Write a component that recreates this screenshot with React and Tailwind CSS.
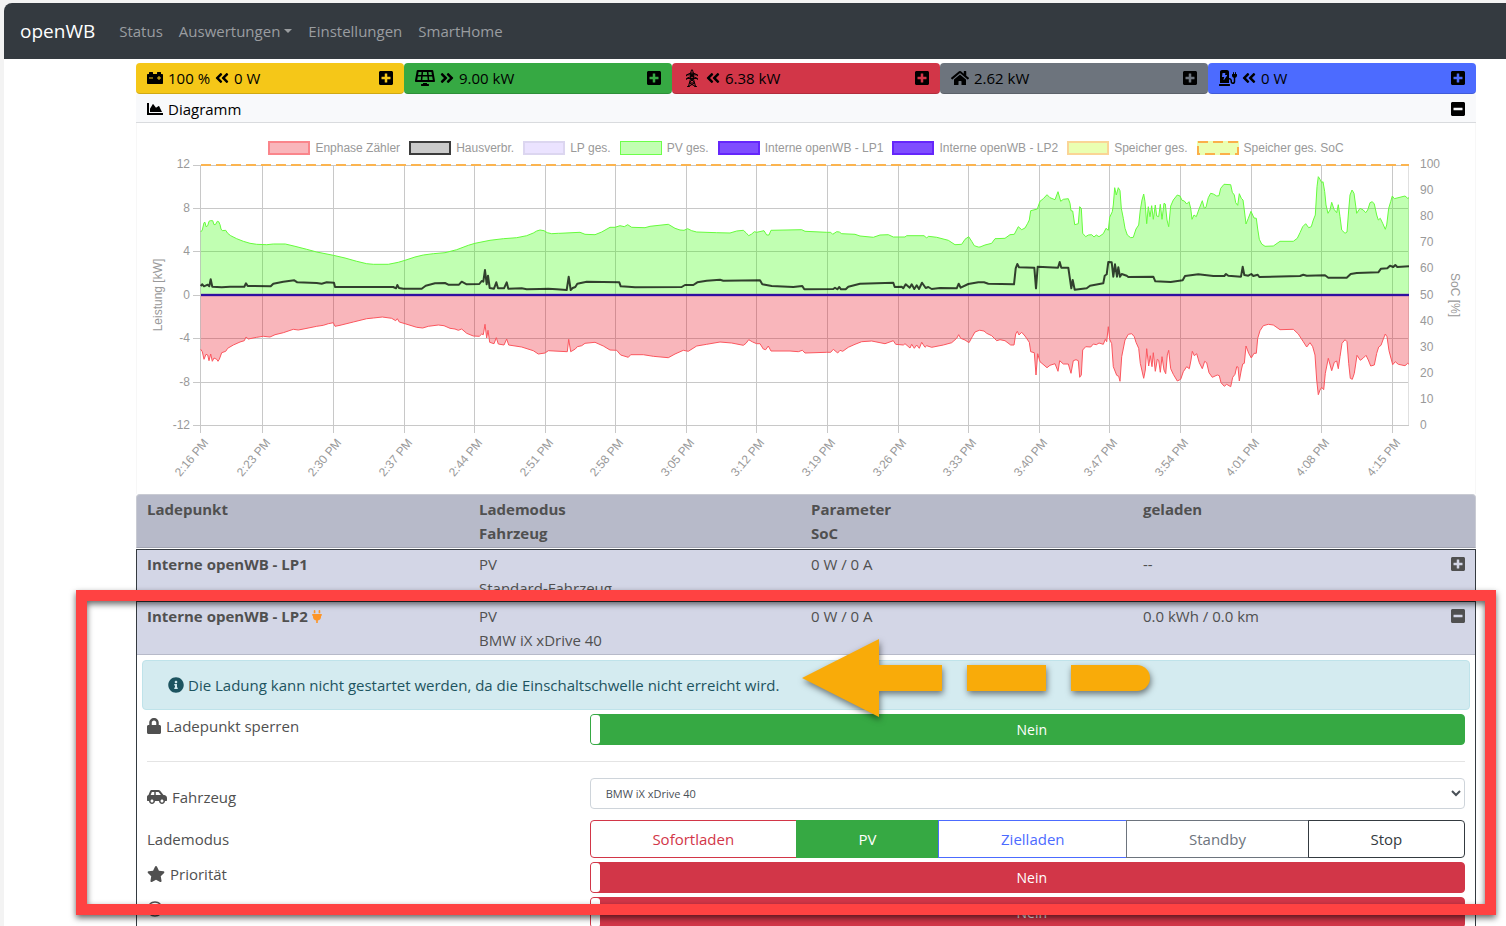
import React from 'react';
import {
  FaAngleDoubleLeft, FaAngleDoubleRight, FaCarBattery, FaCarSide, FaChargingStation, FaChartArea,
  FaHome, FaInfoCircle, FaLock, FaMinusSquare, FaPlusSquare, FaRegClock, FaSolarPanel, FaStar,
} from 'react-icons/fa';

const navLinks = [
  { label: 'Status' },
  { label: 'Auswertungen', dropdown: true },
  { label: 'Einstellungen' },
  { label: 'SmartHome' },
];

const tiles = [
  { name: 'Speicher', icon: FaCarBattery, size: 'h-4 w-4', before: '100 %', arrow: FaAngleDoubleLeft, value: '0 W', color: 'bg-[#f5c718]' },
  { name: 'PV', icon: FaSolarPanel, size: 'h-4 w-5', arrow: FaAngleDoubleRight, value: '9.00 kW', color: 'bg-[#36a943]' },
  { name: 'EVU', icon: Pylon, size: 'h-[18px] w-[18px]', arrow: FaAngleDoubleLeft, value: '6.38 kW', color: 'bg-[#d23648]' },
  { name: 'Hausverbrauch', icon: FaHome, size: 'h-4 w-[18px]', value: '2.62 kW', color: 'bg-[#6d747d]' },
  { name: 'Ladepunkte', icon: FaChargingStation, size: 'h-4 w-[18px]', arrow: FaAngleDoubleLeft, value: '0 W', color: 'bg-[#4c6bff]' },
];

const legend = [
  { label: 'Enphase Zähler', swatch: 'border-2 border-[#fa858b] bg-[#f9b6bb]' },
  { label: 'Hausverbr.', swatch: 'border-2 border-[#3c3c3c] bg-[#cbcbcb]' },
  { label: 'LP ges.', swatch: 'border-2 border-[#dcd6f0] bg-[#ebe3ff]' },
  { label: 'PV ges.', swatch: 'border border-[#6dff4a] bg-[#c2ffb2]' },
  { label: 'Interne openWB - LP1', swatch: 'border-2 border-[#6526fb] bg-[#7f4dff]' },
  { label: 'Interne openWB - LP2', swatch: 'border-2 border-[#6526fb] bg-[#7f4dff]' },
  { label: 'Speicher ges.', swatch: 'border-2 border-[#fad596] bg-[#eaffb2]' },
  { label: 'Speicher ges. SoC', dashed: true },
];

const timeTicks = [
  [200, '2:16 PM'], [262, '2:23 PM'], [333, '2:30 PM'], [404, '2:37 PM'], [474, '2:44 PM'], [545, '2:51 PM'],
  [615, '2:58 PM'], [686, '3:05 PM'], [756, '3:12 PM'], [827, '3:19 PM'], [898, '3:26 PM'], [968, '3:33 PM'],
  [1039, '3:40 PM'], [1109, '3:47 PM'], [1180, '3:54 PM'], [1251, '4:01 PM'], [1321, '4:08 PM'], [1392, '4:15 PM'],
];
const powerTicks = [[165, '12'], [208, '8'], [251, '4'], [295, '0'], [338, '-4'], [382, '-8'], [425, '-12']];
const socTicks = [100, 90, 80, 70, 60, 50, 40, 30, 20, 10, 0];

// samples come in three windows, each with its own start, at three units per chart pixel
const WINDOWS = [140, 560, 980];
const toPath = (parts) =>
  'M' +
  parts
    .map((part, i) =>
      part
        .split(' ')
        .map((p) => {
          const [x, y] = p.split(',').map(Number);
          return `${(WINDOWS[i] + x / 3).toFixed(1)} ${(130 + y / 3).toFixed(1)}`;
        })
        .join('L'),
    )
    .join('L');

const pv = toPath([
  '182,306 187,300 192,278 195,277 198,290 203,287 207,274 211,272 218,272 222,284 227,283 232,274 236,275 240,284 243,297 247,302 257,301 263,310 272,317 290,326 310,334 330,340 350,343 380,344 400,342 436,342 465,349 500,358 530,366 580,376 615,384 650,394 680,401 700,403 745,403 775,397 795,391 825,381 850,375 880,371 915,368 950,359 985,346 1005,340 1050,331 1090,326 1130,323 1160,317 1180,309 1190,303 1200,300 1212,302 1222,308 1235,311 1255,310',
  '0,310 60,307 75,313 105,314 125,306 150,292 165,292 180,287 193,290 203,284 215,292 255,293 270,289 325,283 345,295 360,300 372,301 383,296 395,302 410,306 470,308 510,309 530,303 550,301 558,308 566,317 575,312 583,305 590,307 612,302 620,315 627,315 633,301 725,299 735,304 800,307 812,307 818,313 830,305 838,306 845,311 885,313 900,318 940,322 960,315 985,314 1000,321 1035,321 1040,317 1092,317 1100,324 1105,319 1130,322 1165,331 1185,344 1205,343 1215,328 1226,320 1235,334 1243,347 1255,351',
  '0,351 15,345 35,340 45,326 75,325 90,314 103,313 115,290 125,299 135,294 143,280 148,270 152,242 172,237 180,214 190,206 201,194 210,203 225,209 234,185 242,214 250,208 265,206 270,220 273,242 278,243 284,284 295,281 299,230 304,235 308,310 317,320 325,315 335,314 342,321 349,315 357,320 370,311 378,295 385,301 389,262 397,245 400,225 404,173 409,195 415,173 420,182 424,235 430,265 435,295 442,315 452,323 460,322 468,297 476,285 481,240 486,210 491,192 495,215 500,281 505,230 510,260 515,227 520,268 526,225 530,258 536,260 541,223 546,268 552,220 556,222 561,270 566,290 572,228 580,210 592,195 600,198 606,211 613,213 620,222 627,215 632,235 636,268 642,255 649,260 656,240 667,212 673,235 678,232 685,203 692,190 700,192 710,198 717,197 722,175 732,163 752,164 757,187 763,195 767,218 773,226 778,191 784,205 789,210 793,240 798,282 805,265 813,244 822,264 829,265 833,297 838,328 845,342 855,349 880,348 900,334 940,334 952,325 960,308 968,290 977,281 986,293 994,290 1000,270 1006,255 1011,170 1015,140 1020,148 1025,158 1029,155 1034,185 1038,225 1044,250 1050,240 1055,217 1062,238 1070,248 1075,224 1080,260 1085,300 1095,310 1101,306 1106,240 1110,195 1116,180 1122,190 1130,250 1140,235 1150,240 1157,248 1163,240 1170,218 1177,215 1183,222 1190,255 1195,270 1201,265 1208,280 1216,298 1220,285 1226,235 1232,215 1237,198 1243,206 1275,198 1283,205 1287,203',
]);

const grid = toPath([
  '182,658 187,665 192,688 198,673 203,675 207,692 212,672 217,694 222,684 230,688 234,694 238,688 245,668 257,664 263,655 280,645 300,636 313,632 318,621 325,627 350,622 370,619 390,621 405,614 430,608 460,598 475,600 495,596 530,589 550,586 565,581 580,578 585,589 600,586 640,576 680,566 700,564 727,561 755,565 767,572 772,566 778,576 795,581 830,592 848,594 865,589 895,585 912,587 930,595 945,597 955,601 965,597 980,610 1000,618 1018,619 1025,612 1030,614 1035,583 1040,624 1044,601 1049,637 1062,641 1069,623 1075,642 1092,645 1100,627 1106,645 1145,651 1180,662 1195,672 1215,669 1225,662 1282,665 1286,628 1292,665 1306,657',
  '52,650 65,647 75,640 105,637 130,648 150,660 170,661 182,675 205,682 212,674 250,674 280,679 325,683 345,672 370,661 385,664 410,648 440,643 480,636 515,639 550,646 558,640 566,629 578,636 590,641 600,641 610,657 617,659 625,648 633,663 690,663 715,665 727,661 735,669 800,667 812,667 820,658 833,669 840,661 848,664 865,652 885,643 905,635 935,633 975,641 1000,632 1007,643 1030,645 1035,641 1050,654 1055,643 1063,655 1070,645 1078,655 1085,637 1095,652 1100,647 1115,652 1150,645 1175,638 1190,625 1196,614 1202,625 1215,630 1227,638 1237,620 1245,606 1258,601',
  '0,601 12,603 20,610 35,617 50,632 60,629 75,632 92,645 102,645 107,612 112,604 117,615 125,607 135,618 148,637 152,665 163,668 168,735 173,671 180,695 201,713 210,706 225,701 234,724 239,692 250,702 265,702 273,730 280,692 288,689 295,692 299,742 304,735 308,660 317,650 332,651 340,642 349,644 357,639 370,643 376,628 380,635 385,590 389,628 395,641 400,710 410,736 416,739 420,754 425,680 435,630 445,613 455,611 463,620 468,637 476,655 481,700 491,745 496,720 500,656 506,708 511,677 516,710 520,668 526,724 532,688 536,691 541,727 546,680 552,720 557,731 562,675 566,661 572,716 580,733 592,753 602,748 610,725 620,710 628,716 633,690 637,664 643,677 650,671 658,698 667,716 674,694 680,698 687,728 697,742 712,735 718,737 723,758 733,769 740,763 752,770 758,742 765,733 770,710 774,711 778,753 784,720 788,702 793,700 798,648 806,670 814,684 822,670 829,670 833,625 840,602 850,587 865,583 880,585 900,599 940,598 955,612 970,635 980,651 990,638 998,650 1005,675 1010,750 1015,794 1020,780 1025,772 1031,779 1036,730 1045,685 1055,722 1063,697 1070,693 1075,716 1080,680 1086,640 1095,629 1101,635 1106,700 1111,745 1117,748 1123,730 1131,676 1141,691 1150,684 1158,676 1165,690 1172,708 1183,705 1190,670 1196,651 1203,646 1210,627 1216,612 1221,620 1227,662 1238,704 1246,695 1255,703 1275,707 1283,700 1287,703',
]);

const house = toPath([
  '182,468 187,463 192,469 203,464 208,469 212,448 217,470 245,472 270,470 313,470 318,460 323,468 392,469 400,461 430,455 463,451 472,457 530,459 545,461 560,457 582,458 585,471 760,471 768,475 772,465 777,474 790,476 845,476 857,467 885,460 915,459 925,464 957,464 965,455 980,463 1018,462 1025,453 1030,455 1035,420 1040,463 1044,437 1049,474 1062,476 1069,457 1074,475 1092,475 1100,457 1105,476 1145,475 1160,478 1200,477 1225,476 1250,478 1280,480 1286,440 1292,480 1298,474 1306,471',
  '52,461 80,455 178,457 182,469 205,470 225,472 365,471 375,465 400,465 412,457 440,452 480,449 490,452 600,451 607,463 635,468 700,471 727,468 733,478 820,477 825,473 832,478 838,471 843,478 857,478 865,470 900,461 950,460 1000,458 1004,471 1025,470 1030,475 1037,463 1049,473 1055,463 1063,477 1070,466 1077,477 1086,458 1097,474 1105,471 1115,477 1140,474 1190,475 1196,461 1202,473 1225,462 1255,457',
  '0,457 12,457 25,461 102,463 107,415 112,402 117,412 163,413 168,475 173,410 234,413 239,396 244,413 265,413 274,475 278,450 284,479 320,475 330,467 370,460 374,437 380,433 385,396 395,397 400,440 405,403 411,440 415,412 420,440 425,432 440,437 445,441 520,440 526,454 572,456 608,451 615,438 655,433 700,438 733,438 738,432 745,437 783,440 788,410 793,435 805,437 814,432 820,438 833,434 838,441 960,438 970,434 980,437 1035,436 1045,443 1100,443 1112,432 1130,429 1195,427 1203,416 1222,415 1230,407 1240,411 1246,405 1252,411 1287,409',
]);

function Pylon({ className }) {
  return (
    <svg viewBox="0 0 20 20" className={className} fill="none" stroke="currentColor" strokeWidth="1.1">
      <path d="M8.5 4.5L9.5 1H10.5L11.5 4.5M4 8V6.5L8.5 4.5H11.5L16 6.5V8M4 6.5H16M4 12V10.5L8.5 8.5H11.5L16 10.5V12M4 10.5H16M8.5 4.5V10.5L6 19.5M11.5 4.5V10.5L14 19.5M8.5 4.5L11.5 8.5M11.5 4.5L8.5 8.5M8.5 10.5L13 15.5L6 19.5M11.5 10.5L7 15.5L14 19.5M7 15.5H13M4.5 19.5H7.5M12.5 19.5H15.5" />
    </svg>
  );
}

function Plug() {
  return (
    <svg viewBox="0 0 384 512" className="ml-1 h-[13px] w-[10px] text-[#fd9526]" fill="currentColor">
      <path d="M320 32a32 32 0 0 0-64 0v96h64zm48 128H16a16 16 0 0 0-16 16v32a16 16 0 0 0 16 16h16v32a160 160 0 0 0 128 156.800V512h64v-99.200A160 160 0 0 0 352 256v-32h16a16 16 0 0 0 16-16v-32a16 16 0 0 0-16-16zM128 32a32 32 0 0 0-64 0v96h64z" />
    </svg>
  );
}

function Navbar() {
  return (
    <nav className="flex h-14 items-center bg-[#343a40] px-4">
      <a href="#home" className="mr-6 text-[19px] text-white">openWB</a>
      <div className="flex gap-4">
        {navLinks.map((link) => (
          <a key={link.label} href={'#' + link.label} className="flex items-center gap-1 text-[#9a9da0]">
            {link.label}
            {link.dropdown && <span className="border-x-4 border-t-4 border-x-transparent border-t-[#9a9da0]" />}
          </a>
        ))}
      </div>
    </nav>
  );
}

function Tile({ tile }) {
  const Icon = tile.icon;
  const Arrow = tile.arrow;
  return (
    <div className={`flex items-center gap-[5px] rounded border-b border-black/15 px-[11px] py-[3px] text-black ${tile.color}`}>
      <Icon className={tile.size} />
      {tile.before && <span>{tile.before}</span>}
      {Arrow && <Arrow className="h-4 w-3.5" />}
      <span>{tile.value}</span>
      <button type="button" aria-label={tile.name + ' anzeigen'} className="ml-auto">
        <FaPlusSquare className="h-4 w-3.5" />
      </button>
    </div>
  );
}

function Chart() {
  return (
    <div className="border-x border-[#f7f7f7] bg-white pt-[18px] font-['Liberation_Sans',Arial,sans-serif] text-[12px] text-[#999]">
      <div className="flex justify-center gap-[9px] leading-[14px]">
        {legend.map((item) => (
          <div key={item.label} className="flex items-center gap-[5px]">
            {item.dashed ? (
              <svg width="42" height="14" className="bg-[#eaffb2]">
                <rect x="1" y="1" width="40" height="12" fill="none" stroke="#fbb04a" strokeWidth="2" strokeDasharray="10 5" />
              </svg>
            ) : (
              <span className={`h-[14px] w-[42px] ${item.swatch}`} />
            )}
            {item.label}
          </div>
        ))}
      </div>
      <svg viewBox="137 155 1338 339" className="block h-auto w-full" fill="none">
        {powerTicks.map(([y]) => (
          <path key={y} d={`M193 ${y + 0.5}H1409`} stroke="#c8c8c8" />
        ))}
        {timeTicks.map(([x]) => (
          <path key={x} d={`M${x + 0.5} 165V433`} stroke="#c8c8c8" />
        ))}
        <path d="M1408.5 165V425" stroke="#e0e0e0" />

        <path d={`${pv}L1409 295H200.7Z`} fill="rgba(51,255,0,0.3)" />
        <path d={pv} stroke="#66fb3c" />
        <path d={`${grid}L1409 295H200.7Z`} fill="rgba(235,12,29,0.3)" />
        <path d={grid} stroke="#fb565e" />
        <path d={house} stroke="#000" strokeOpacity="0.75" strokeWidth="2" strokeLinejoin="round" />
        <path d="M201 295H1409" stroke="#8a3fae" strokeOpacity="0.5" strokeWidth="3" />
        <path d="M201 295H1409" stroke="#3010a0" strokeWidth="2" />
        <path d="M201 165H1409" stroke="#fbb450" strokeWidth="2" strokeDasharray="10 5" />

        <g fill="#999">
          {powerTicks.map(([y, label], i) => (
            <text key={label} x="190" y={Math.round(168 + i * 43.5)} textAnchor="end">{label}</text>
          ))}
          {socTicks.map((soc, i) => (
            <text key={soc} x="1420" y={168 + Math.round(i * 26.1)}>{soc}</text>
          ))}
          {timeTicks.map(([x, label]) => (
            <text key={label} transform={`translate(${x + 9} 443) rotate(-50)`} textAnchor="end">{label}</text>
          ))}
          <text transform="translate(162 295) rotate(-90)" textAnchor="middle">Leistung [kW]</text>
          <text transform="translate(1451 295) rotate(90)" textAnchor="middle">SoC [%]</text>
        </g>
      </svg>
    </div>
  );
}

function PointHeader({ name, plugged, mode, vehicle, power, charged, open }) {
  const Toggle = open ? FaMinusSquare : FaPlusSquare;
  return (
    <div className="grid grid-cols-4 border-b border-[#b7bac9] bg-[#d3d6e6] px-[5px] py-[2px]">
      <div className="flex h-6 items-center px-[5px] font-bold">
        {name}
        {plugged && <Plug />}
      </div>
      <div className="px-[5px]">
        <div>{mode}</div>
        <div>{vehicle}</div>
      </div>
      <div className="px-[5px]">{power}</div>
      <div className="flex h-6 items-center justify-between px-[5px]">
        {charged}
        <button type="button" aria-label={name + (open ? ' schließen' : ' öffnen')}>
          <Toggle className="h-4 w-3.5" />
        </button>
      </div>
    </div>
  );
}

function Row({ id, icon: Icon, size, label, low, children }) {
  return (
    <div className="grid grid-cols-3">
      <label htmlFor={id} className={`flex items-start px-[5px] ${low ? 'pt-[7px]' : ''}`}>
        <span className="flex h-6 items-center gap-[5px]">
          {Icon && <Icon className={size} />}
          {label}
        </span>
      </label>
      <div className="col-span-2 px-[5px]">{children}</div>
    </div>
  );
}

function Switch({ id, color }) {
  return (
    <label className={`flex h-[31px] cursor-pointer rounded border text-[14px] text-white ${color}`}>
      <input id={id} type="checkbox" className="sr-only" />
      <span className="w-[9px] rounded-[3px] bg-white" />
      <span className="flex flex-1 items-center justify-center">Nein</span>
    </label>
  );
}

const modes = [
  { label: 'Sofortladen', style: 'rounded-l border-[#d23648] text-[#d23648]' },
  { label: 'PV', style: 'border-[#36a943] bg-[#36a943] text-white', active: true },
  { label: 'Zielladen', style: 'border-[#4c6bff] text-[#4c6bff]' },
  { label: 'Standby', style: 'border-[#6d747d] text-[#6d747d]' },
  { label: 'Stop', style: 'rounded-r border-[#343a40] text-[#343a40]' },
];

function ModeGroup() {
  return (
    <div id="lademodus" className="flex h-[38px]">
      {modes.map((mode, i) => (
        <label
          key={mode.label}
          className={`flex flex-auto cursor-pointer items-center justify-center border px-3 ${i > 0 ? '-ml-px' : ''} ${mode.style}`}
        >
          <input type="radio" name="lademodus" defaultChecked={mode.active} className="sr-only" />
          {mode.label}
        </label>
      ))}
    </div>
  );
}

// frame and arrow drawn on top of the page to point at the message
function Annotation() {
  return (
    <>
      <div className="pointer-events-none absolute top-[590px] right-[10px] left-[76px] h-[325px] border-[11px] border-[#ff4242] drop-shadow-[0_3px_3px_rgba(0,0,0,0.6)]" />
      <svg
        viewBox="0 0 350 80"
        className="pointer-events-none absolute top-[639px] left-[802px] h-20 w-[350px] overflow-visible drop-shadow-[1px_3px_3px_rgba(0,0,0,0.5)]"
        fill="#f9ab09"
      >
        <path d="M0 39L77 0V26H140V52H77V78Z" />
        <path d="M165 26H244V52H165Z" />
        <path d="M269 26H335A13 13 0 0 1 335 52H269Z" />
      </svg>
    </>
  );
}

export default function App() {
  return (
    <div className="relative h-screen overflow-hidden bg-[#f3f3f3] pt-[3px] pl-1 font-['Open_Sans','Noto_Sans',sans-serif] text-[15px] leading-6 text-[#505050]">
      <div className="min-h-full overflow-hidden rounded-tl-lg bg-white">
        <Navbar />
        <main className="mt-1 mr-[30px] ml-[132px]">
          <div className="grid grid-cols-5">
            {tiles.map((tile) => (
              <Tile key={tile.name} tile={tile} />
            ))}
          </div>

          <div className="flex items-center gap-[5px] border-b border-[#d9dbde] bg-[#f8f9fb] px-[11px] pt-[3px] pb-px text-black">
            <FaChartArea className="h-4 w-4" />
            Diagramm
            <button type="button" aria-label="Diagramm schließen" className="ml-auto">
              <FaMinusSquare className="h-4 w-3.5" />
            </button>
          </div>
          <Chart />

          <div className="grid grid-cols-4 rounded-t border border-[#c9cbd3] border-b-[#a2a5b2] bg-[#b7bac9] px-[5px] py-[2px] font-bold">
            <div className="px-[5px]">Ladepunkt</div>
            <div className="px-[5px]">Lademodus<br />Fahrzeug</div>
            <div className="px-[5px]">Parameter<br />SoC</div>
            <div className="px-[5px]">geladen</div>
          </div>

          <section className="mt-px h-[52px] overflow-hidden border border-b-0 border-[#343a40]">
            <PointHeader name="Interne openWB - LP1" mode="PV" vehicle="Standard-Fahrzeug" power="0 W / 0 A" charged="--" />
          </section>

          <section className="border border-[#343a40]">
            <PointHeader name="Interne openWB - LP2" plugged open mode="PV" vehicle="BMW iX xDrive 40" power="0 W / 0 A" charged="0.0 kWh / 0.0 km" />
            <div className="flex flex-col gap-1 p-[5px]">
              <div role="alert" className="flex items-center gap-1 rounded border border-[#bfe3ea] bg-[#d4ebf0] px-[25px] py-3 text-[#1d5460]">
                <FaInfoCircle className="h-4 w-4" />
                Die Ladung kann nicht gestartet werden, da die Einschaltschwelle nicht erreicht wird.
              </div>
              <Row id="sperren" icon={FaLock} size="h-4 w-3.5" label="Ladepunkt sperren">
                <Switch id="sperren" color="border-[#36a943] bg-[#36a943]" />
              </Row>
              <hr className="mx-[5px] my-3 border-[#e4e4e4]" />
              <Row id="fahrzeug" icon={FaCarSide} size="h-4 w-5" label="Fahrzeug" low>
                <select id="fahrzeug" className="mb-[7px] block h-[31px] w-full rounded border border-[#ced4da] bg-white px-[11px] text-[11px] text-[#495057]">
                  <option>BMW iX xDrive 40</option>
                </select>
              </Row>
              <Row id="lademodus" label="Lademodus" low>
                <ModeGroup />
              </Row>
              <Row id="prioritaet" icon={FaStar} size="h-4 w-[18px]" label="Priorität">
                <Switch id="prioritaet" color="border-[#d23648] bg-[#d23648]" />
              </Row>
              <Row id="zeitladen" icon={FaRegClock} size="h-4 w-4" label="Zeitladen">
                <Switch id="zeitladen" color="border-[#d23648] bg-[#d23648]" />
              </Row>
            </div>
          </section>
        </main>
      </div>
      <Annotation />
    </div>
  );
}
